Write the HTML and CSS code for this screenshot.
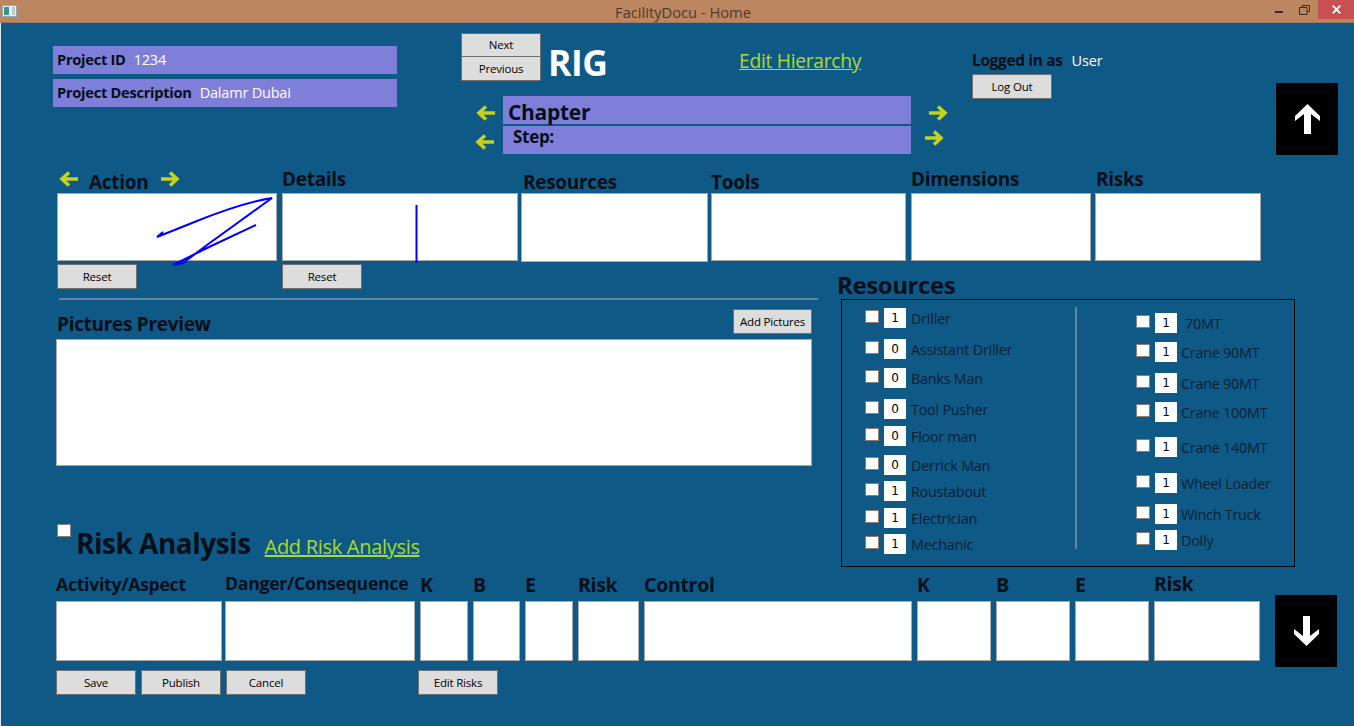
FILE: index.html
```html
<!DOCTYPE html>
<html lang="en">
<head>
    <meta charset="UTF-8">
    <meta name="viewport" content="width=device-width, initial-scale=1.0">
    <title>FacilityDocu - Home</title>
    <link rel="stylesheet" href="styles.css">
</head>
<body>
    <svg class="defs" width="0" height="0">
        <symbol id="arrowLeft" viewBox="0 0 19 16">
            <path d="M19 8H3M10 1.5L3 8l7 6.500" fill="none" stroke="currentColor" stroke-width="3.600"/>
        </symbol>
        <symbol id="arrowRight" viewBox="0 0 19 16">
            <path d="M0 8h16M9 1.500L16 8l-7 6.500" fill="none" stroke="currentColor" stroke-width="3.600"/>
        </symbol>
    </svg>

    <div class="window">
        <div class="titlebar">
            <svg class="app-icon" width="15" height="12" viewBox="0 0 15 12">
                <rect x="0.500" y="0.500" width="14" height="11" fill="#e8eef0" stroke="#9aa7ad"/>
                <rect x="2" y="2" width="5" height="8" fill="#3f8f8c"/>
                <rect x="10" y="2" width="3" height="8" fill="#b9cdd6"/>
            </svg>
            <div class="title">FacilityDocu - Home</div>
            <div class="controls">
                <div class="ctl ctl-min"><svg width="8" height="2"><rect width="8" height="2" fill="#3a2a20"/></svg></div>
                <div class="ctl ctl-max">
                    <svg width="11" height="10" viewBox="0 0 11 10"><path d="M3 2.500V.5h7.500v6H8M.5 2.500h7.500v7H.5z" fill="none" stroke="#3a2a20"/></svg>
                </div>
                <div class="ctl ctl-close">
                    <svg width="9" height="9" viewBox="0 0 9 9"><path d="M.7.7l7.600 7.600M8.300.7L.7 8.300" stroke="#fff" stroke-width="1.800"/></svg>
                </div>
            </div>
        </div>

        <div class="main">
            <div class="header">
                <div class="project-col">
                    <div class="bar project-bar"><b class="dark-label">Project ID</b><span class="bar-value">1234</span></div>
                    <div class="bar project-bar"><b class="dark-label">Project Description</b><span class="bar-value">Dalamr Dubai</span></div>
                </div>
                <div class="nav-col">
                    <div class="nav-top">
                        <div class="stack">
                            <button class="btn stack-btn">Next</button>
                            <button class="btn stack-btn">Previous</button>
                        </div>
                        <div class="rig">RIG</div>
                        <a class="link link-hierarchy" href="#">Edit Hierarchy</a>
                    </div>
                    <div class="chapter-row">
                        <svg class="arrow arrow-c1"><use href="#arrowLeft"/></svg>
                        <div class="bar chapter-bar">Chapter</div>
                        <svg class="arrow arrow-c2"><use href="#arrowRight"/></svg>
                    </div>
                    <div class="chapter-row step-row">
                        <svg class="arrow arrow-s1"><use href="#arrowLeft"/></svg>
                        <div class="bar step-bar">Step:</div>
                        <svg class="arrow arrow-s2"><use href="#arrowRight"/></svg>
                    </div>
                </div>
                <div class="login-col">
                    <div class="login-line"><b class="login-label">Logged in as</b><span class="user">User</span></div>
                    <button class="btn">Log Out</button>
                </div>
                <div class="scroll-btn scroll-up">
                    <svg width="25" height="30" viewBox="0 0 25 30"><path d="M12.500 0L25 12v5l-9-7v20H9V10l-9 7v-5z" fill="#fff"/></svg>
                </div>
            </div>

            <div class="fields">
                <div class="field f-action">
                    <div class="action-label">
                        <svg class="arrow"><use href="#arrowLeft"/></svg>
                        <span class="field-label action-text">Action</span>
                        <svg class="arrow"><use href="#arrowRight"/></svg>
                    </div>
                    <div class="box box-action">
                        <svg class="sketch" width="220" height="80" viewBox="0 0 220 80">
                            <path d="M199 32L150 55L116 72L126 70L150 52L215 5C190 9 165 18 140 28L100 44L106 39" fill="none" stroke="#0000ff" stroke-width="2"/>
                        </svg>
                    </div>
                </div>
                <div class="field f-details">
                    <div class="field-label label-high">Details</div>
                    <div class="box box-action">
                        <svg class="sketch" width="236" height="80" viewBox="0 0 236 80">
                            <path d="M134.500 12V70" fill="none" stroke="#0000ff" stroke-width="2"/>
                        </svg>
                    </div>
                </div>
                <div class="field f-resources">
                    <div class="field-label">Resources</div>
                    <div class="box"></div>
                </div>
                <div class="field f-tools">
                    <div class="field-label">Tools</div>
                    <div class="box"></div>
                </div>
                <div class="field f-dimensions">
                    <div class="field-label label-high">Dimensions</div>
                    <div class="box"></div>
                </div>
                <div class="field f-risks">
                    <div class="field-label label-high">Risks</div>
                    <div class="box"></div>
                </div>
            </div>

            <div class="middle">
                <div class="left-col">
                    <div class="reset-row">
                        <button class="btn">Reset</button>
                        <button class="btn">Reset</button>
                    </div>
                    <div class="divider"></div>
                    <div class="pictures-head">
                        <div class="pictures-title">Pictures Preview</div>
                        <button class="btn btn-add">Add Pictures</button>
                    </div>
                    <div class="box preview"></div>
                    <div class="risk-head">
                        <input class="check check-risk" type="checkbox">
                        <div class="risk-title">Risk Analysis</div>
                        <a class="link link-risk" href="#">Add Risk Analysis</a>
                    </div>
                </div>
                <div class="right-col">
                    <div class="res-title">Resources</div>
                    <div class="res-panel">
                        <div class="res-list res-left">
                            <div class="res-row"><input class="check" type="checkbox"><span class="num">1</span><span class="res-name">Driller</span></div>
                            <div class="res-row"><input class="check" type="checkbox"><span class="num">0</span><span class="res-name">Assistant Driller</span></div>
                            <div class="res-row"><input class="check" type="checkbox"><span class="num">0</span><span class="res-name">Banks Man</span></div>
                            <div class="res-row"><input class="check" type="checkbox"><span class="num">0</span><span class="res-name">Tool Pusher</span></div>
                            <div class="res-row"><input class="check" type="checkbox"><span class="num">0</span><span class="res-name">Floor man</span></div>
                            <div class="res-row"><input class="check" type="checkbox"><span class="num">0</span><span class="res-name">Derrick Man</span></div>
                            <div class="res-row"><input class="check" type="checkbox"><span class="num">1</span><span class="res-name">Roustabout</span></div>
                            <div class="res-row"><input class="check" type="checkbox"><span class="num">1</span><span class="res-name">Electrician</span></div>
                            <div class="res-row"><input class="check" type="checkbox"><span class="num">1</span><span class="res-name">Mechanic</span></div>
                        </div>
                        <div class="res-sep"></div>
                        <div class="res-list res-right">
                            <div class="res-row"><input class="check" type="checkbox"><span class="num">1</span><span class="res-name res-indent">70MT</span></div>
                            <div class="res-row"><input class="check" type="checkbox"><span class="num">1</span><span class="res-name">Crane 90MT</span></div>
                            <div class="res-row"><input class="check" type="checkbox"><span class="num">1</span><span class="res-name">Crane 90MT</span></div>
                            <div class="res-row"><input class="check" type="checkbox"><span class="num">1</span><span class="res-name">Crane 100MT</span></div>
                            <div class="res-row"><input class="check" type="checkbox"><span class="num">1</span><span class="res-name">Crane 140MT</span></div>
                            <div class="res-row"><input class="check" type="checkbox"><span class="num">1</span><span class="res-name">Wheel Loader</span></div>
                            <div class="res-row"><input class="check" type="checkbox"><span class="num">1</span><span class="res-name">Winch Truck</span></div>
                            <div class="res-row"><input class="check" type="checkbox"><span class="num">1</span><span class="res-name">Dolly</span></div>
                        </div>
                    </div>
                </div>
            </div>

            <div class="risk-section">
                <div class="risk-table">
                    <div class="rt-label">Activity/Aspect</div>
                    <div class="rt-label rt-high">Danger/Consequence</div>
                    <div class="rt-label rt-big">K</div>
                    <div class="rt-label rt-big">B</div>
                    <div class="rt-label rt-big">E</div>
                    <div class="rt-label rt-big">Risk</div>
                    <div class="rt-label rt-big">Control</div>
                    <div class="rt-label rt-big">K</div>
                    <div class="rt-label rt-big">B</div>
                    <div class="rt-label rt-big">E</div>
                    <div class="rt-label rt-big rt-high">Risk</div>

                    <div class="box rt-box rt-first"></div>
                    <div class="box rt-box"></div>
                    <div class="box rt-box"></div>
                    <div class="box rt-box"></div>
                    <div class="box rt-box"></div>
                    <div class="box rt-box"></div>
                    <div class="box rt-box"></div>
                    <div class="box rt-box"></div>
                    <div class="box rt-box"></div>
                    <div class="box rt-box"></div>
                    <div class="box rt-box"></div>
                </div>
                <div class="scroll-btn scroll-down">
                    <svg width="25" height="30" viewBox="0 0 25 30"><path d="M12.500 30L25 18v-5l-9 7V0H9v20l-9-7v5z" fill="#fff"/></svg>
                </div>
            </div>

            <div class="actions">
                <button class="btn">Save</button>
                <button class="btn">Publish</button>
                <button class="btn">Cancel</button>
                <button class="btn btn-edit">Edit Risks</button>
            </div>
        </div>
    </div>
</body>
</html>
```

FILE: styles.css
```css
body {
    margin: 0;
    font-family: 'Open Sans', 'Noto Sans', sans-serif;
    background-color: #0f5987;
    color: #03101a;
    overflow: hidden;
}

.defs {
    position: absolute;
}

.window {
    display: flex;
    flex-direction: column;
    width: 1354px;
    height: 726px;
    overflow: hidden;
}

.titlebar {
    display: flex;
    align-items: flex-start;
    height: 22px;
    flex-shrink: 0;
    background-color: #bb8660;
    border-bottom: 1px solid #a6785a;
}

.app-icon {
    flex-shrink: 0;
    margin: 5px 0 0 2px;
}

.title {
    flex: 1;
    padding: 3px 0 0 83px;
    text-align: center;
    font-size: 14.700px;
    line-height: 18px;
    color: #4c3a2e;
}

.controls {
    display: flex;
    width: 88px;
}

.ctl {
    display: flex;
    justify-content: center;
    align-items: center;
    height: 19px;
}

.ctl-min {
    width: 25px;
    box-sizing: border-box;
    padding-top: 5px;
}

.ctl-max {
    width: 27px;
}

.ctl-close {
    width: 36px;
    background-color: #c75050;
}

.main {
    flex: 1;
    background-color: #0f5987;
    border-left: 1px solid #dfe8ee;
}

.header {
    display: flex;
    height: 142px;
}

.bar {
    background-color: #7f7fd9;
    box-sizing: border-box;
}

.project-col {
    width: 344px;
    margin: 23px 0 0 52px;
}

.project-bar {
    display: flex;
    align-items: center;
    height: 28px;
    margin-bottom: 5px;
    padding: 0 0 2px 4px;
}

.dark-label {
    font-size: 14.700px;
    font-weight: 700;
    letter-spacing: -0.3px;
}

.login-label {
    font-size: 15.400px;
    font-weight: 700;
    letter-spacing: -0.3px;
}

.bar-value {
    margin-left: 8px;
    font-size: 14.500px;
    color: #fff;
    letter-spacing: -0.2px;
}

.nav-col {
    width: 511px;
    margin: 10px 0 0 64px;
}

.nav-top {
    display: flex;
    height: 48px;
}

.stack {
    display: flex;
    flex-direction: column;
}

.btn {
    display: block;
    width: 80px;
    height: 25px;
    padding: 0 0 1px;
    background-color: #dddddd;
    border: 1px solid #707070;
    font-family: 'Open Sans', 'Noto Sans', sans-serif;
    font-size: 11.500px;
    letter-spacing: -0.2px;
    color: #000;
}

.stack-btn {
    height: 24px;
}

.stack-btn + .stack-btn {
    height: 25px;
    margin-top: -1px;
}

.rig {
    width: 198px;
    padding-left: 7px;
    box-sizing: border-box;
    font-size: 35.500px;
    font-weight: 700;
    line-height: 58px;
    color: #fff;
    letter-spacing: -0.5px;
}

.link {
    color: #a9dc2c;
    text-decoration: underline;
    letter-spacing: -0.3px;
}

.link-hierarchy {
    margin-top: 12px;
    font-size: 19.300px;
    line-height: 32px;
}

.chapter-row {
    display: flex;
    align-items: flex-start;
    margin-top: 15px;
}

.step-row {
    margin-top: 2px;
}

.arrow {
    display: block;
    width: 19px;
    height: 16px;
    color: #c4d21e;
    flex-shrink: 0;
}

.arrow-c1 {
    margin: 9px 8px 0 15px;
}

.arrow-c2 {
    margin: 9px 0 0 18px;
}

.arrow-s1 {
    margin: 8px 9px 0 14px;
}

.arrow-s2 {
    margin: 4px 0 0 14px;
}

.chapter-bar {
    width: 408px;
    height: 28px;
    padding-left: 5px;
    font-size: 21px;
    font-weight: 700;
    line-height: 32px;
    letter-spacing: -0.3px;
}

.step-bar {
    width: 408px;
    height: 28px;
    padding-left: 10px;
    font-size: 17px;
    font-weight: 700;
    line-height: 22px;
    letter-spacing: -0.3px;
}

.login-col {
    width: 200px;
    margin-top: 24px;
}

.login-line {
    display: flex;
    align-items: center;
    height: 27px;
}

.user {
    margin-left: 9px;
    font-size: 14.500px;
    color: #fff;
    letter-spacing: -0.2px;
}

.scroll-btn {
    display: flex;
    justify-content: center;
    align-items: center;
    width: 62px;
    height: 72px;
    background-color: #000;
    flex-shrink: 0;
}

.scroll-up {
    margin: 60px 0 0 104px;
}

.fields {
    display: flex;
    height: 96px;
    margin-left: 56px;
}

.field {
    display: flex;
    flex-direction: column;
    justify-content: flex-end;
}

.field-label {
    font-size: 19px;
    font-weight: 700;
    line-height: 24px;
    letter-spacing: -0.3px;
    margin-bottom: -1px;
}

.label-high {
    margin-bottom: 2px;
}

.action-label {
    display: flex;
    align-items: flex-start;
    height: 28px;
    margin-left: 2px;
}

.action-label .arrow {
    margin-top: 6px;
}

.action-text {
    width: 83px;
    padding-left: 11px;
    box-sizing: border-box;
    margin-top: 5px;
}

.box {
    height: 68px;
    background-color: #fff;
    border: 1px solid #a9a9a9;
    box-sizing: border-box;
}

.box-action {
    position: relative;
}

.sketch {
    position: absolute;
    top: -1px;
    left: -1px;
    overflow: visible;
}

.f-action {
    width: 220px;
}

.f-details {
    width: 236px;
    margin-left: 5px;
}

.f-resources {
    width: 187px;
    margin-left: 3px;
}

.f-resources .field-label {
    padding-left: 2px;
}

.f-tools {
    width: 195px;
    margin-left: 3px;
}

.f-dimensions {
    width: 180px;
    margin-left: 5px;
}

.f-risks {
    width: 166px;
    margin-left: 4px;
}

.f-risks .field-label {
    padding-left: 1px;
}

.f-resources .box {
    height: 69px;
    margin-bottom: -1px;
}

.middle {
    display: flex;
    height: 306px;
}

.left-col {
    width: 762px;
    margin-left: 55px;
}

.reset-row {
    display: flex;
    gap: 145px;
    margin: 3px 0 0 1px;
}

.divider {
    height: 2px;
    margin: 9px 0 0 3px;
    background-color: #5f88a6;
}

.pictures-head {
    display: flex;
    align-items: flex-start;
    justify-content: space-between;
    width: 756px;
    height: 40px;
    margin-top: 9px;
}

.pictures-title {
    margin: 3px 0 0 1px;
    font-size: 19px;
    font-weight: 700;
    line-height: 24px;
    letter-spacing: -0.3px;
}

.btn-add {
    width: 79px;
}

.preview {
    width: 756px;
    height: 127px;
    margin-top: -10px;
}

.risk-head {
    display: flex;
    align-items: flex-start;
    margin-top: 58px;
}

.check {
    appearance: none;
    display: block;
    box-sizing: border-box;
    width: 14px;
    height: 13px;
    margin: 2px 5px 0 0;
    background-color: #fff;
    border: 1px solid #8b7f78;
    border-radius: 0;
    flex-shrink: 0;
}

.check-risk {
    margin: 0 5px 0 1px;
}

.risk-title {
    font-size: 28px;
    font-weight: 700;
    line-height: 38px;
    letter-spacing: -0.5px;
}

.link-risk {
    margin: 10px 0 0 14px;
    font-size: 20px;
    line-height: 26px;
}

.right-col {
    margin-left: 19px;
}

.res-title {
    height: 38px;
    font-size: 24px;
    font-weight: 700;
    line-height: 48px;
    letter-spacing: -0.4px;
}

.res-panel {
    display: flex;
    box-sizing: border-box;
    width: 454px;
    height: 268px;
    margin-left: 4px;
    border: 1px solid #000;
}

.res-list {
    display: grid;
}

.res-left {
    width: 210px;
    height: 252px;
    margin: 8px 0 0 23px;
    grid-template-rows: 31px 29px 31px 27px 29px 26px 27px 26px 18px;
}

.res-sep {
    width: 2px;
    height: 242px;
    margin-top: 7px;
    background-color: #5f88a6;
}

.res-right {
    height: 240px;
    margin: 13px 0 0 59px;
    grid-template-rows: 29px 31px 29px 35px 36px 31px 26px 20px;
}

.res-row {
    display: flex;
    align-items: flex-start;
}

.num {
    display: block;
    box-sizing: border-box;
    width: 22px;
    height: 20px;
    background-color: #fff;
    font-family: 'DejaVu Sans', sans-serif;
    font-size: 12px;
    line-height: 20px;
    text-align: center;
    color: #000;
}

.res-name {
    margin-left: 5px;
    padding-top: 1px;
    font-size: 14.300px;
    line-height: 20px;
    letter-spacing: -0.2px;
    color: #031f33;
}

.res-right .res-name {
    margin-left: 4px;
}

.res-right .res-indent {
    margin-left: 8px;
}

.risk-section {
    display: flex;
    height: 100px;
}

.risk-table {
    display: grid;
    width: 1204px;
    margin: 6px 0 0 55px;
    grid-template-columns: 164px 190px 48px 47px 48px 61px 268px 74px 74px 74px 106px;
    grid-template-rows: 28px 60px;
    column-gap: 5px;
    align-items: start;
}

.rt-label {
    margin-top: -1px;
    font-size: 17.700px;
    font-weight: 700;
    line-height: 24px;
    letter-spacing: -0.3px;
    white-space: nowrap;
}

.rt-big {
    margin-top: 0;
    font-size: 19.500px;
}

.rt-high {
    margin-top: -2px;
}

.rt-big.rt-high {
    margin-top: -1px;
}

.rt-box {
    height: 60px;
}

.rt-first {
    margin-right: -2px;
}

.scroll-down {
    margin: 28px 0 0 15px;
}

.actions {
    display: flex;
    gap: 5px;
    margin: 3px 0 0 55px;
}

.btn-edit {
    margin-left: 107px;
}
```
